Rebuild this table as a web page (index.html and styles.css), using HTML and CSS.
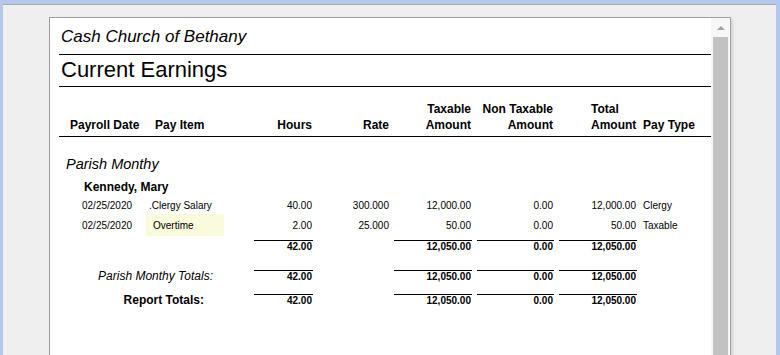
FILE: index.html
```html
<!DOCTYPE html>
<html>
<head>
<meta charset="utf-8">
<link rel="stylesheet" href="styles.css">
</head>
<body>
<div class="viewport">
  <div class="paper">
    <div class="report">
      <div class="org">Cash Church of Bethany</div>
      <div class="title">Current Earnings</div>
      <div class="row head">
        <div class="c-date">Payroll Date</div>
        <div class="c-item">Pay Item</div>
        <div class="c-hours">Hours</div>
        <div class="c-rate">Rate</div>
        <div class="c-tax">Taxable<br>Amount</div>
        <div class="c-non">Non Taxable<br>Amount</div>
        <div class="c-total h-total">Total<br>Amount</div>
        <div class="c-type">Pay Type</div>
      </div>
      <div class="group">Parish Monthy</div>
      <div class="emp">Kennedy, Mary</div>
      <div class="row data">
        <div class="c-date">02/25/2020</div>
        <div class="c-item">.Clergy Salary</div>
        <div class="c-hours">40.00</div>
        <div class="c-rate">300.000</div>
        <div class="c-tax">12,000.00</div>
        <div class="c-non">0.00</div>
        <div class="c-total">12,000.00</div>
        <div class="c-type">Clergy</div>
      </div>
      <div class="row data">
        <div class="c-date">02/25/2020</div>
        <div class="c-item sel">Overtime</div>
        <div class="c-hours">2.00</div>
        <div class="c-rate">25.000</div>
        <div class="c-tax">50.00</div>
        <div class="c-non">0.00</div>
        <div class="c-total">50.00</div>
        <div class="c-type">Taxable</div>
      </div>
      <div class="row tot sub">
        <div class="label"></div>
        <div class="c-hours line">42.00</div>
        <div class="c-rate"></div>
        <div class="c-tax line">12,050.00</div>
        <div class="c-non line">0.00</div>
        <div class="c-total line">12,050.00</div>
        <div class="c-type"></div>
      </div>
      <div class="row tot gtot">
        <div class="label glabel">Parish Monthy Totals:</div>
        <div class="c-hours line">42.00</div>
        <div class="c-rate"></div>
        <div class="c-tax line">12,050.00</div>
        <div class="c-non line">0.00</div>
        <div class="c-total line">12,050.00</div>
        <div class="c-type"></div>
      </div>
      <div class="row tot rtot">
        <div class="label rlabel">Report Totals:</div>
        <div class="c-hours line">42.00</div>
        <div class="c-rate"></div>
        <div class="c-tax line">12,050.00</div>
        <div class="c-non line">0.00</div>
        <div class="c-total line">12,050.00</div>
        <div class="c-type"></div>
      </div>
    </div>
    <div class="scrollbar">
      <div class="arrow"><span class="tri"></span></div>
      <div class="thumb"></div>
    </div>
  </div>
</div>
</body>
</html>
```

FILE: styles.css
```css
html, body {
  margin: 0;
  padding: 0;
}
body {
  width: 780px;
  height: 355px;
  background: #b4c8ee;
  font-family: "Liberation Sans", Arial, sans-serif;
  color: #000;
  overflow: hidden;
}
.viewport {
  margin: 4px 4px 0 3px;
  height: 346px;
  background: #efefef;
  border-top: 1px solid #a8a8a8;
  padding: 12px 0 0 46px;
  overflow: hidden;
  box-sizing: content-box;
}
.paper {
  width: 682px;
  height: 380px;
  box-sizing: border-box;
  border: 1px solid #a0a0a0;
  background: #fff;
  display: flex;
  box-shadow: 2px 2px 3px rgba(0, 0, 0, 0.12);
}
.report {
  width: 661px;
  box-sizing: border-box;
  padding-left: 9px;
}
.org {
  font-size: 17px;
  font-style: italic;
  line-height: 20px;
  padding: 9px 0 7px 2px;
  border-bottom: 1px solid #000;
}
.title {
  font-size: 22px;
  line-height: 26px;
  padding: 2px 0 3px 2px;
  border-bottom: 1px solid #000;
}
.row {
  display: grid;
  grid-template-columns: 87px 78px 89px 81px 83px 82px 78px 1fr;
}
.row > div {
  white-space: nowrap;
}
.c-hours, .c-rate, .c-tax, .c-non, .c-total {
  text-align: right;
}
.c-hours { margin-left: 30px; padding-right: 1px; }
.c-rate { padding-right: 5px; }
.c-tax { margin-right: 5px; padding-right: 1px; }
.c-non { margin-right: 5px; padding-right: 1px; }
.c-total { padding-right: 1px; }
.c-type { padding-left: 6px; }

.head {
  font-size: 12px;
  font-weight: bold;
  line-height: 16px;
  align-items: end;
  padding: 14px 0 3px;
  border-bottom: 1px solid #000;
}
.head .c-date { padding-left: 11px; }
.head .c-item { padding-left: 9px; }
.head .h-total { text-align: left; padding-left: 32px; }

.group {
  font-size: 14.5px;
  font-style: italic;
  line-height: 18px;
  margin-top: 18px;
  padding-left: 7px;
}
.emp {
  font-size: 12px;
  font-weight: bold;
  line-height: 16px;
  margin-top: 6px;
  padding-left: 25px;
}
.data {
  font-size: 10px;
  line-height: 20px;
}
.emp + .data { margin-top: 1px; }
.data .c-date { padding-left: 23px; }
.data .c-item { padding-left: 3px; }
.data .c-item.sel {
  padding-left: 7px;
  background: #fafadc;
  box-shadow: 0 -2px 0 0 #fafadc;
}

.tot {
  font-size: 10px;
  font-weight: bold;
  line-height: 11px;
}
.tot > div {
  border-top: 1px solid transparent;
}
.tot > div.line {
  border-top-color: #000;
}
.tot .label {
  grid-column: 1 / 3;
  text-align: right;
  font-size: 12px;
}
.sub { margin-top: 4px; }
.gtot { margin-top: 18px; }
.rtot { margin-top: 12px; }
.glabel {
  font-weight: normal;
  font-style: italic;
  padding-right: 11px;
}
.rlabel {
  padding-right: 20px;
}

.scrollbar {
  width: 19px;
  background: #f7f7f7;
  display: flex;
  flex-direction: column;
}
.arrow {
  height: 19px;
  display: flex;
  justify-content: center;
  align-items: flex-start;
  padding-left: 1px;
  box-sizing: border-box;
}
.tri {
  margin-top: 8px;
  width: 0;
  height: 0;
  border-left: 4.5px solid transparent;
  border-right: 4.5px solid transparent;
  border-bottom: 4.5px solid #a3a3a3;
}
.thumb {
  flex: 1;
  margin: 0 2px 0 2px;
  background: #c2c2c2;
}
```
